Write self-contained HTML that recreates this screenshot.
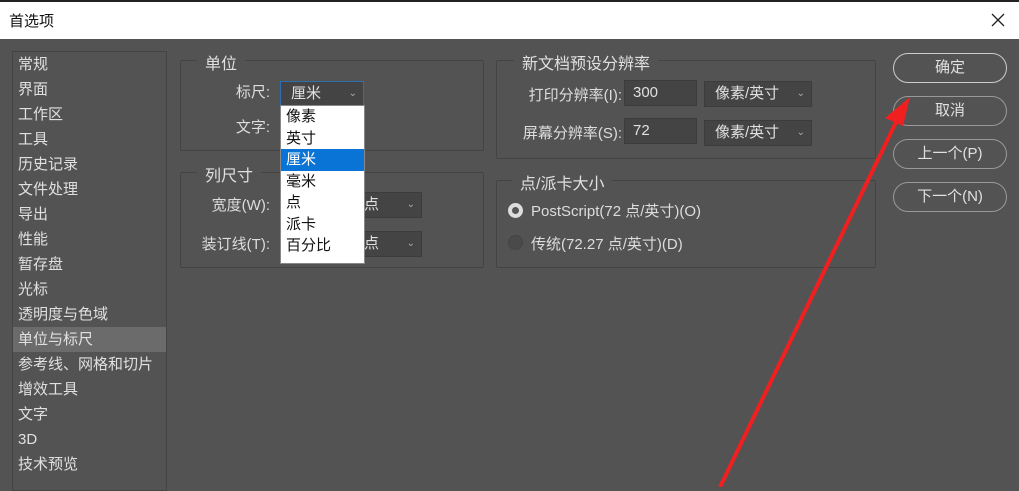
<!DOCTYPE html>
<html><head><meta charset="utf-8"><style>
*{margin:0;padding:0;box-sizing:border-box}
body{width:1019px;height:487px;background:#535353;position:relative;overflow:hidden;font-family:"Liberation Sans","Noto Sans CJK SC",sans-serif;color:#ddd;font-size:15px}
.a{position:absolute}
.top{left:0;top:0;width:1019px;height:2px;background:#222}
.title{left:0;top:2px;width:1019px;height:37px;background:#fff;color:#111;font-size:15px;padding:8px 0 0 9px}
.side{left:12px;top:51px;width:155px;height:440px;border:1px solid #444}
.side div{height:25px;line-height:25px;padding-left:5px;font-size:15px;color:#e0e0e0}
.side .sel{background:#6b6b6b}
.grp{border:1px solid #444;border-radius:2px}
.lg{background:#535353;padding:0 8px;font-size:16px;color:#e0e0e0}
.lbl{font-size:15px;color:#ddd;text-align:right}
.sel2{background:#444;border:1px solid #3c3c3c;color:#e0e0e0;font-size:15px;padding-left:10px;line-height:24px}
.chev{position:absolute;right:6px;top:0;font-size:10px;color:#aaa}
.btn{left:893px;width:114px;height:30px;border:1px solid #999;border-radius:15px;text-align:center;line-height:28px;font-size:15px;color:#e0e0e0}
.dd{left:280px;top:105px;width:85px;height:159px;background:#fff;border:1px solid #888}
.dd div{height:21.5px;line-height:21px;padding-left:5px;color:#111;font-size:15px}
.dd .s{background:#0a74d6;color:#fff}
</style></head><body>
<div class="a top"></div>
<div class="a title">首选项</div>
<svg class="a" style="left:990px;top:12px" width="16" height="16"><path d="M2 2L14 14M14 2L2 14" stroke="#222" stroke-width="1.3"/></svg>
<div class="a side">
<div>常规</div><div>界面</div><div>工作区</div><div>工具</div><div>历史记录</div><div>文件处理</div><div>导出</div><div>性能</div><div>暂存盘</div><div>光标</div><div>透明度与色域</div><div class="sel">单位与标尺</div><div>参考线、网格和切片</div><div>增效工具</div><div>文字</div><div>3D</div><div>技术预览</div>
</div>

<div class="a grp" style="left:180px;top:60px;width:304px;height:91px"></div>
<div class="a lg" style="left:197px;top:50px">单位</div>
<div class="a lbl" style="left:200px;top:81px;width:70px">标尺:</div>
<div class="a lbl" style="left:200px;top:116px;width:70px">文字:</div>
<div class="a sel2" style="left:280px;top:81px;width:84px;height:25px;border:1px solid #2d6fb0">厘米<span class="chev">⌄</span></div>

<div class="a grp" style="left:180px;top:172px;width:304px;height:96px"></div>
<div class="a lg" style="left:197px;top:162px">列尺寸</div>
<div class="a lbl" style="left:180px;top:194px;width:90px">宽度(W):</div>
<div class="a lbl" style="left:180px;top:233px;width:90px">装订线(T):</div>
<div class="a sel2" style="left:345px;top:192px;width:77px;height:26px;padding-left:18px">点<span class="chev">⌄</span></div>
<div class="a sel2" style="left:345px;top:231px;width:77px;height:26px;padding-left:18px">点<span class="chev">⌄</span></div>

<div class="a grp" style="left:496px;top:60px;width:380px;height:99px"></div>
<div class="a lg" style="left:514px;top:50px">新文档预设分辨率</div>
<div class="a lbl" style="left:500px;top:84px;width:122px">打印分辨率(I):</div>
<div class="a lbl" style="left:500px;top:122px;width:122px">屏幕分辨率(S):</div>
<div class="a sel2" style="left:624px;top:80px;width:73px;height:26px;padding-left:8px">300</div>
<div class="a sel2" style="left:624px;top:118px;width:73px;height:26px;padding-left:8px">72</div>
<div class="a sel2" style="left:704px;top:81px;width:108px;height:26px">像素/英寸<span class="chev">⌄</span></div>
<div class="a sel2" style="left:704px;top:120px;width:108px;height:26px">像素/英寸<span class="chev">⌄</span></div>

<div class="a grp" style="left:496px;top:180px;width:380px;height:88px"></div>
<div class="a lg" style="left:512px;top:170px">点/派卡大小</div>
<div class="a" style="left:508px;top:203px;width:15px;height:15px;border-radius:50%;background:#ddd"><div class="a" style="left:4px;top:4px;width:7px;height:7px;border-radius:50%;background:#555"></div></div>
<div class="a" style="left:531px;top:200px;font-size:15px">PostScript(72 点/英寸)(O)</div>
<div class="a" style="left:508px;top:235px;width:15px;height:15px;border-radius:50%;background:#4a4a4a;border:1px solid #444"></div>
<div class="a" style="left:531px;top:233px;font-size:15px">传统(72.27 点/英寸)(D)</div>

<div class="a btn" style="top:53px;border-color:#ccc">确定</div>
<div class="a btn" style="top:96px">取消</div>
<div class="a btn" style="top:139px">上一个(P)</div>
<div class="a btn" style="top:182px">下一个(N)</div>

<div class="a dd"><div>像素</div><div>英寸</div><div class="s">厘米</div><div>毫米</div><div>点</div><div>派卡</div><div>百分比</div></div>

<svg class="a" style="left:0;top:0" width="1019" height="487"><path d="M720 487L898 118" stroke="#f02020" stroke-width="4"/><path d="M910 97L885 118L903 126Z" fill="#f02020"/></svg>
</body></html>
